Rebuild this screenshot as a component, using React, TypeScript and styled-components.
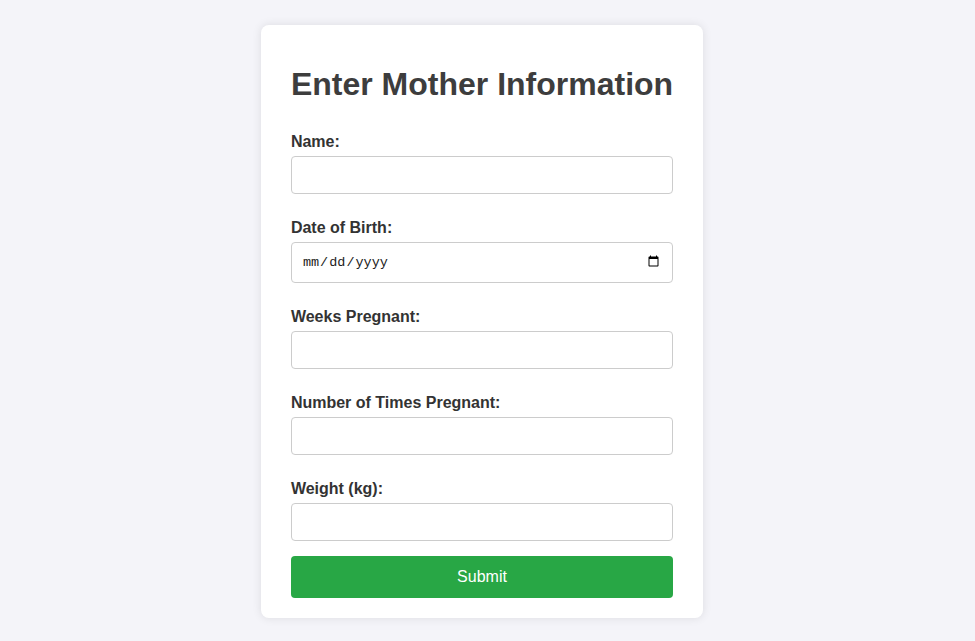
import React, { useState } from 'react'
import styled, { createGlobalStyle } from 'styled-components'

const GlobalStyle = createGlobalStyle`
  html, body {
    margin: 0;
    padding: 0;
    background-color: #f4f4f9;
    font-family: 'Liberation Sans', Arial, sans-serif;
  }
`

const fields = [
  { id: 'name', label: 'Name:', type: 'text' },
  { id: 'dob', label: 'Date of Birth:', type: 'date' },
  { id: 'weeks', label: 'Weeks Pregnant:', type: 'number' },
  { id: 'times', label: 'Number of Times Pregnant:', type: 'number' },
  { id: 'weight', label: 'Weight (kg):', type: 'number' },
]

const App = () => {
  const [values, setValues] = useState<Record<string, string>>({})

  const handleChange = (id: string, value: string) => {
    setValues((prev) => ({ ...prev, [id]: value }))
  }

  return (
    <>
      <GlobalStyle />
      <Page>
        <Card onSubmit={(e) => e.preventDefault()}>
          <Title>Enter Mother Information</Title>
          {fields.map((field) => (
            <FieldGroup key={field.id}>
              <Label htmlFor={field.id}>{field.label}</Label>
              <Input
                id={field.id}
                type={field.type}
                $date={field.type === 'date'}
                value={values[field.id] || ''}
                onChange={(e) => handleChange(field.id, e.target.value)}
              />
            </FieldGroup>
          ))}
          <SubmitButton type="submit">Submit</SubmitButton>
        </Card>
      </Page>
    </>
  )
}

const Page = styled.div`
  display: flex;
  justify-content: center;
  align-items: center;
  height: 100vh;
  padding: 1px 11px 0 0;
  box-sizing: border-box;
`

const Card = styled.form`
  display: flex;
  flex-direction: column;
  background-color: #fff;
  padding: 20px 30px;
  border-radius: 8px;
  box-shadow: 0 0 10px rgba(0, 0, 0, 0.1);
`

const Title = styled.h2`
  margin: 21px 0 30px;
  font-size: 32px;
  font-weight: bold;
  color: #3d3d3d;
  white-space: nowrap;
`

const FieldGroup = styled.div`
  display: flex;
  flex-direction: column;
  margin-bottom: 25px;

  &:nth-last-of-type(1) {
    margin-bottom: 15px;
  }
`

const Label = styled.label`
  font-size: 16px;
  font-weight: bold;
  color: #333;
  margin-bottom: 5px;
`

const Input = styled.input<{ $date?: boolean }>`
  box-sizing: border-box;
  width: 100%;
  height: ${(p) => (p.$date ? '41px' : '38px')};
  padding: 10px;
  border: 1px solid #ccc;
  border-radius: 4px;
  background: #fff;
  font-family: ${(p) => (p.$date ? "'Liberation Mono', 'DejaVu Sans Mono', monospace" : "'Liberation Sans', Arial, sans-serif")};
  font-size: ${(p) => (p.$date ? '13.5px' : '16px')};
  color: #222;
  outline: none;
`

const SubmitButton = styled.button`
  height: 42px;
  border: none;
  border-radius: 4px;
  background-color: #28a745;
  color: #fff;
  font-family: 'Liberation Sans', Arial, sans-serif;
  font-size: 16px;
  cursor: pointer;
`

export default App
